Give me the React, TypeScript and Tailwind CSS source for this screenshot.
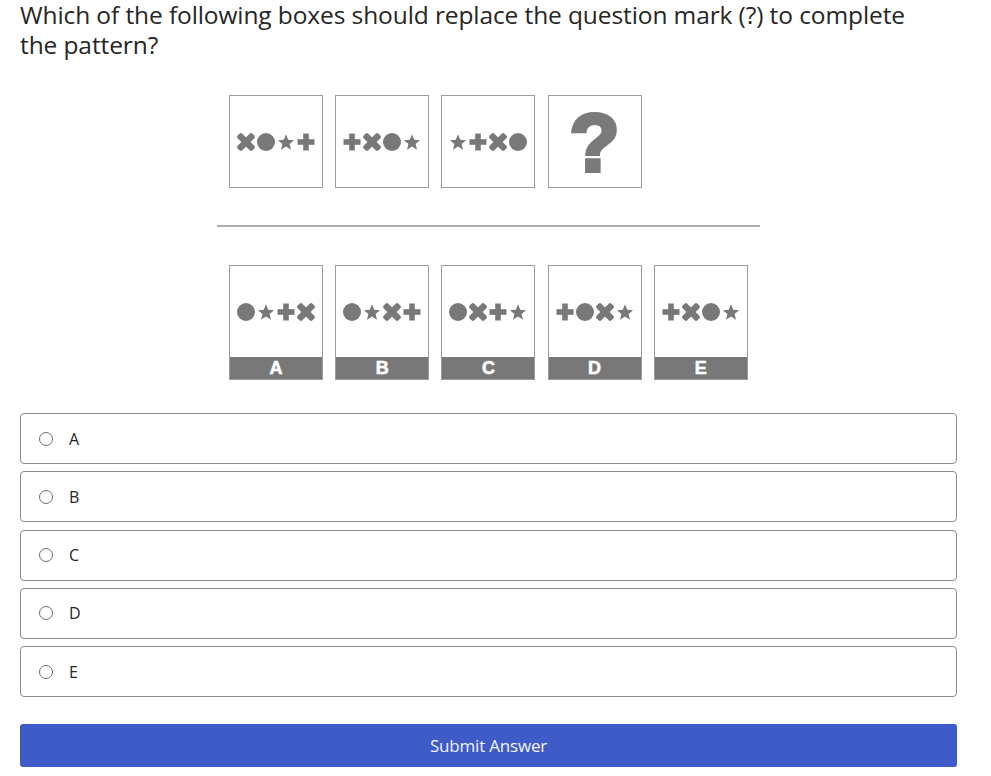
import type { ReactNode } from "react";

type Shape = "x" | "o" | "s" | "p";

const questionRow: Shape[][] = [
  ["x", "o", "s", "p"],
  ["p", "x", "o", "s"],
  ["s", "p", "x", "o"],
];

const answers: { label: string; shapes: Shape[] }[] = [
  { label: "A", shapes: ["o", "s", "p", "x"] },
  { label: "B", shapes: ["o", "s", "x", "p"] },
  { label: "C", shapes: ["o", "x", "p", "s"] },
  { label: "D", shapes: ["p", "o", "x", "s"] },
  { label: "E", shapes: ["p", "x", "o", "s"] },
];

const FILL = "#787878";

function Glyph({ kind }: { kind: Shape }) {
  return (
    <svg width="20" height="20" viewBox="0 0 20 20" className="shrink-0">
      {kind === "o" && <circle cx="10" cy="10" r="9" fill={FILL} />}
      {kind === "p" && (
        <g fill={FILL}>
          <rect x="1.5" y="7.2" width="17" height="5.6" />
          <rect x="7.2" y="1.5" width="5.6" height="17" />
        </g>
      )}
      {kind === "x" && (
        <g fill={FILL} transform="rotate(45 10 10)">
          <rect x="-0.5" y="6.7" width="21" height="6.6" rx="2" />
          <rect x="6.7" y="-0.5" width="6.6" height="21" rx="2" />
        </g>
      )}
      {kind === "s" && (
        <polygon
          fill={FILL}
          points="10,2.3 12.23,7.73 18.08,8.17 13.61,11.97 15,17.68 10,14.6 5,17.68 6.39,11.97 1.92,8.17 7.77,7.73"
        />
      )}
    </svg>
  );
}

function Tile({ children, label }: { children: ReactNode; label?: string }) {
  return (
    <div className="flex w-[94px] flex-col border-[1.5px] border-[#9c9c9c] bg-white">
      <div className="flex h-[91px] items-center justify-center">{children}</div>
      {label && (
        <div className="flex h-[22px] items-center justify-center bg-[#787878] font-['Liberation_Sans',Arial,sans-serif] text-[18px] font-bold leading-none text-white [-webkit-text-stroke:0.6px_#ffffff]">
          {label}
        </div>
      )}
    </div>
  );
}

function ShapeRow({ shapes }: { shapes: Shape[] }) {
  return (
    <div className="flex items-center">
      {shapes.map((s, i) => (
        <Glyph key={i} kind={s} />
      ))}
    </div>
  );
}

export default function App() {
  return (
    <div className="min-h-[776px] bg-white font-['Open_Sans','Noto_Sans',sans-serif] text-[#262626]">
      <div className="ml-[20px] w-[937px]">
        <h1 className="w-[920px] text-[24.5px] font-normal leading-[30px] tracking-[-0.1px]">
          Which of the following boxes should replace the question mark (?) to complete the pattern?
        </h1>

        <div className="mx-auto mt-[35px] w-[543px]">
          <div className="flex gap-[12.2px] pl-[12px]">
            {questionRow.map((row, i) => (
              <Tile key={i}>
                <ShapeRow shapes={row} />
              </Tile>
            ))}
            <Tile>
              <span className="mt-[3px] font-['Liberation_Sans',Arial,sans-serif] text-[82px] font-bold leading-none text-[#7a7a7a] [-webkit-text-stroke:4px_#7a7a7a]">
                ?
              </span>
            </Tile>
          </div>
          <div className="mt-[37px] h-[2px] bg-[#adadad]" />
          <div className="mt-[38px] flex gap-[12.2px] pl-[12px]">
            {answers.map((a) => (
              <Tile key={a.label} label={a.label}>
                <ShapeRow shapes={a.shapes} />
              </Tile>
            ))}
          </div>
        </div>

        <div className="mt-[33px] flex flex-col gap-[7.25px]">
          {answers.map((a) => (
            <label
              key={a.label}
              className="flex h-[51px] items-center rounded-[4px] border border-[#8c8c8c] pl-[18px] text-[16px]"
            >
              <span className="h-[14px] w-[14px] rounded-full border border-[#6e6e6e]" />
              <span className="ml-[16px]">{a.label}</span>
            </label>
          ))}
        </div>

        <button className="mt-[27px] flex h-[43px] w-full items-center justify-center rounded-[3px] bg-[#3f5bc8] text-[17px] tracking-[-0.2px] text-[#f2f4fb]">
          Submit Answer
        </button>
      </div>
    </div>
  );
}
